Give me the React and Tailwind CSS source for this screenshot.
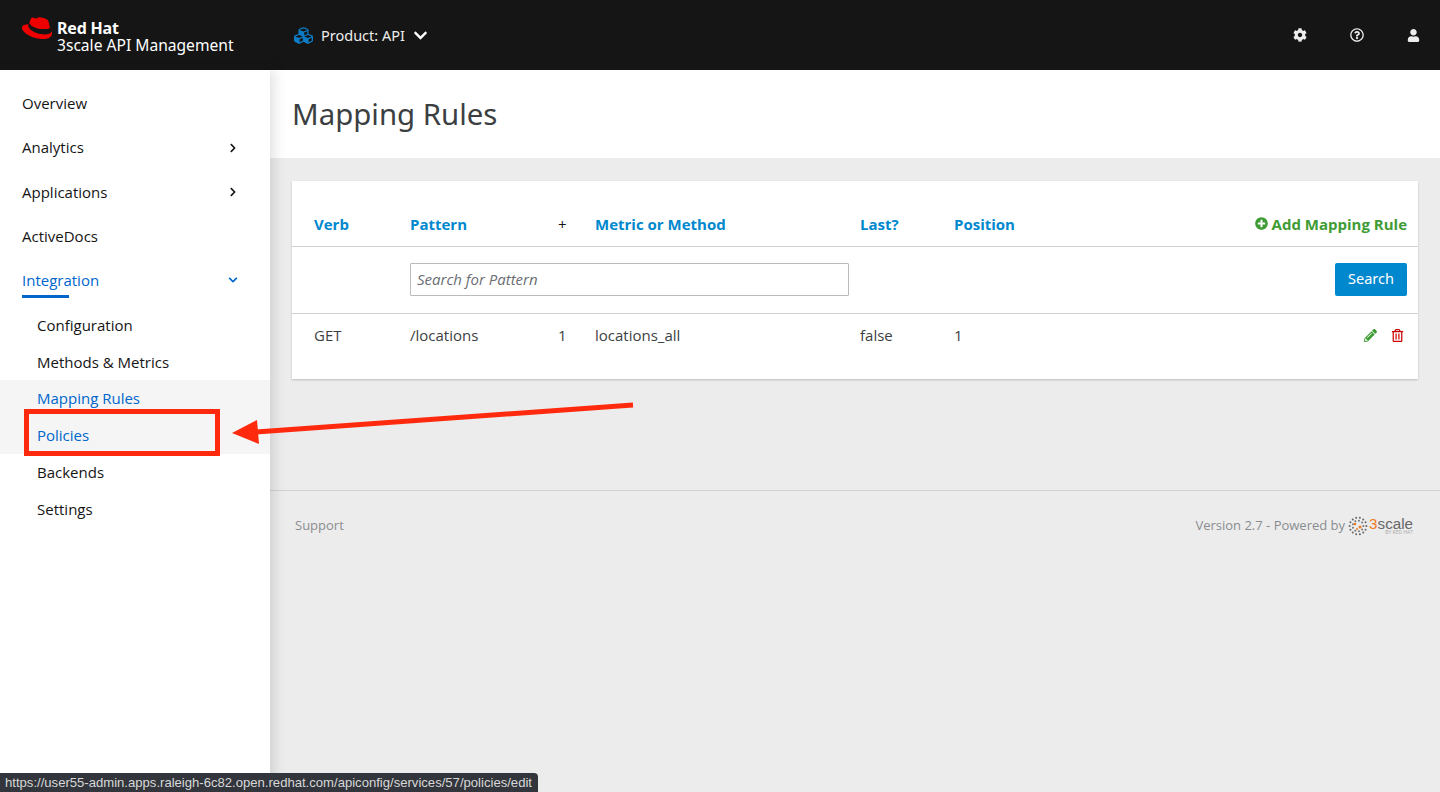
import React from "react";
import {
  FaChevronDown,
  FaChevronRight,
  FaCog,
  FaCubes,
  FaPencilAlt,
  FaPlusCircle,
  FaRegQuestionCircle,
  FaRegTrashAlt,
  FaUser,
} from "react-icons/fa";

const RedHatLogo = () => (
  <svg width="30" height="23" viewBox="0 0 26.500 20">
    <path
      d="M20 12.6c2 0 4.8-.4 4.8-2.7 0-.2 0-.4-.1-.5l-1.2-5.200C23.200 3 22.900 2.300 20.800 1.300 19.200.5 15.700 0 14.700 0c-1 0-1.200 1.200-2.300 1.200-1.100 0-1.900-.9-2.900-.9-1 0-1.600.7-2.100 2.100 0 0-1.400 4-1.600 4.600 0 .1 0 .2 0 .3 0 1.500 5.900 6.300 14.200 5.300z"
      fill="#ee0000"
    />
    <path
      d="M25.900 9.800c.3 1.400.3 1.500.3 1.700 0 2.300-2.600 3.600-6 3.600-7.800 0-14.600-4.600-14.600-7.600 0-.4.1-.8.300-1.200C3 6.400 0 6.800 0 9.500 0 13.900 10.400 19.300 18.600 19.300c6.300 0 7.900-2.800 7.900-5.100 0-1.800-1.500-3.800-.6-4.400z"
      fill="#ee0000"
    />
    <path
      d="M25.900 9.800c.3 1.400.3 1.500.3 1.700 0 2.300-2.600 3.600-6 3.600-7.800 0-14.600-4.600-14.600-7.600 0-.4.1-.8.300-1.200l.6-1.500c0 .1 0 .2 0 .3 0 1.500 5.900 6.300 14.200 5.300 2 0 4.800-.4 4.800-2.700z"
      fill="#151515"
    />
  </svg>
);

const ScaleLogo = () => (
  <div className="flex items-center">
    <svg width="20" height="20" viewBox="0 0 20 20">
      {[...Array(14)].map((_, i) => {
        const a = (i / 14) * Math.PI * 2;
        return <circle key={i} cx={10 + Math.cos(a) * 8.4} cy={10 + Math.sin(a) * 8.4} r="1" fill="#666" />;
      })}
      {[...Array(9)].map((_, i) => {
        const a = (i / 9) * Math.PI * 2;
        return <circle key={i} cx={10 + Math.cos(a) * 5.4} cy={10 + Math.sin(a) * 5.4} r="1" fill="#777" />;
      })}
      <circle cx="7" cy="8" r="1.300" fill="#ee7b22" />
      <circle cx="12" cy="11" r="1.500" fill="#ee7b22" />
      <circle cx="9" cy="13" r="1" fill="#ee7b22" />
    </svg>
    <div className="flex flex-col items-end leading-none ml-[1px]">
      <span className="text-[15.200px] leading-[13px] text-[#666] font-['Liberation_Sans',sans-serif]">
        <span className="text-[#ee7b22]">3</span>scale
      </span>
      <span className="text-[5px] leading-[5px] text-[#aaa]">BY RED HAT</span>
    </div>
  </div>
);

const NavItem = ({ label, icon, active }) => (
  <div className="h-[44.300px] pl-[22px] pr-[32px] flex items-center justify-between">
    <span className={`relative ${active ? "text-[#0066cc]" : "text-[#151515]"}`}>
      {label}
      {active && <span className="absolute left-0 -bottom-[6px] w-[47px] h-[3px] bg-[#0066cc]" />}
    </span>
    {icon}
  </div>
);

const SubItem = ({ label, active }) => (
  <div className={`h-[36.800px] pl-[37px] flex items-center ${active ? "text-[#0066cc] bg-[#f5f5f5]" : "text-[#151515]"}`}>
    {label}
  </div>
);

const tableCols = "grid grid-cols-[96px_148px_37px_265px_94px_1fr] pl-[22px] pr-[11px]";

const App = () => {
  return (
    <div className="relative w-[1440px] h-[792px] overflow-hidden bg-[#ececec] text-[15px] font-['Open_Sans','Noto_Sans',sans-serif]">
      {/* Top bar */}
      <header className="h-[70px] bg-[#151515] flex items-center text-white">
        <div className="w-[293px] h-[70px] pl-[22px] pt-[17px] flex items-start">
          <div className="mr-[5px]">
            <RedHatLogo />
          </div>
          <div className="flex flex-col mt-[3px] font-['Noto_Sans',sans-serif]">
            <span className="text-[16px] leading-[17px] font-bold -tracking-[0.2px]">Red Hat</span>
            <span className="text-[15.600px] leading-[17px]">3scale API Management</span>
          </div>
        </div>
        <div className="flex items-center mt-[1px] font-['Noto_Sans',sans-serif] text-[14.500px] text-[#ededed]">
          <FaCubes size={19} className="text-[#0d7cc4] mr-[8px] ml-[1px]" />
          <span>Product: API</span>
          <FaChevronDown size={15} className="ml-[8px] text-white" />
        </div>
        <div className="ml-auto flex items-center gap-[43px] pr-[20px] text-[#ededed]">
          <FaCog size={14} />
          <FaRegQuestionCircle size={14} />
          <FaUser size={13} />
        </div>
      </header>

      <div className="flex h-[722px]">
        {/* Sidebar */}
        <aside className="w-[270px] shrink-0 bg-white shadow-[4px_0_12px_rgba(0,0,0,0.12)] z-10 pt-[11.100px]">
          <NavItem label="Overview" />
          <NavItem label="Analytics" icon={<FaChevronRight size={10} className="text-[#151515]" />} />
          <NavItem label="Applications" icon={<FaChevronRight size={10} className="text-[#151515]" />} />
          <NavItem label="ActiveDocs" />
          <NavItem label="Integration" active icon={<FaChevronDown size={10} className="text-[#0066cc]" />} />
          <div className="pt-[4px]">
            <SubItem label="Configuration" />
            <SubItem label="Methods & Metrics" />
            <SubItem label="Mapping Rules" active />
            <SubItem label="Policies" active />
            <SubItem label="Backends" />
            <SubItem label="Settings" />
          </div>
        </aside>

        {/* Main content */}
        <main className="flex-1 min-w-0">
          <div className="h-[88px] bg-white pl-[22px] flex items-center">
            <h1 className="text-[29.400px] text-[#3c3f42] font-['Noto_Sans',sans-serif] mt-[1px]">Mapping Rules</h1>
          </div>

          <section className="mt-[23px] ml-[22px] mr-[22px] h-[198px] bg-white shadow-[0_1px_2px_rgba(0,0,0,0.2)]">
            <div className={`${tableCols} h-[66px] pb-[1px] items-end border-b border-[#d1d1d1] font-bold text-[#0088ce]`}>
              <span className="pb-[10px]">Verb</span>
              <span className="pb-[10px]">Pattern</span>
              <span className="pb-[10px] font-normal text-[#151515]">+</span>
              <span className="pb-[10px]">Metric or Method</span>
              <span className="pb-[10px]">Last?</span>
              <span className="pb-[10px] flex justify-between">
                Position
                <span className="flex items-center text-[#3f9c35]">
                  <FaPlusCircle size={13} className="mr-[4px]" />
                  Add Mapping Rule
                </span>
              </span>
            </div>

            <div className="h-[67px] pb-[2px] border-b border-[#d1d1d1] pl-[118px] pr-[11px] flex items-center justify-between">
              <input
                readOnly
                placeholder="Search for Pattern"
                className="w-[439px] h-[33px] px-[6px] border border-[#bbb] rounded-[1px] text-[15px] italic placeholder:text-[#6a6e73] outline-none"
              />
              <button className="w-[72px] h-[33px] bg-[#0088ce] text-white rounded-[2px] text-[14.500px] font-['Noto_Sans',sans-serif]">
                Search
              </button>
            </div>

            <div className={`${tableCols} text-[#3c3f42] pt-[10px]`}>
              <span>GET</span>
              <span>/locations</span>
              <span>1</span>
              <span>locations_all</span>
              <span>false</span>
              <span className="flex justify-between items-center">
                1
                <span className="flex items-center gap-[14px] pr-[3px]">
                  <FaPencilAlt size={13} className="text-[#3f9c35]" />
                  <FaRegTrashAlt size={13} className="text-[#cc0000]" />
                </span>
              </span>
            </div>
          </section>

          {/* Footer */}
          <footer className="mt-[111px] border-t border-[#d1d1d1] h-[71px] pl-[25px] pr-[27px] flex items-center justify-between text-[13px] text-[#8a8d90]">
            <span>Support</span>
            <span className="flex items-center gap-[3px]">
              Version 2.7 - Powered by
              <ScaleLogo />
            </span>
          </footer>
        </main>
      </div>

      {/* Annotation */}
      <div className="absolute left-[24px] top-[409px] w-[196px] h-[47px] border-[5px] border-[#ff2a0d] z-20" />
      <svg className="absolute left-0 top-0 z-20" width="1440" height="792">
        <line x1="256" y1="432" x2="633" y2="405" stroke="#ff2a0d" strokeWidth="5" />
        <polygon points="232,433 257,420 259,444" fill="#ff2a0d" />
      </svg>

      {/* Browser status bar */}
      <div className="absolute left-0 bottom-0 h-[19px] pl-[5px] pr-[6px] flex items-center bg-[#32363c] rounded-tr-[4px] text-[13.100px] text-[#d8d8d8] z-30 font-['Liberation_Sans',sans-serif]">
        https://user55-admin.apps.raleigh-6c82.open.redhat.com/apiconfig/services/57/policies/edit
      </div>
    </div>
  );
};

export default App;
